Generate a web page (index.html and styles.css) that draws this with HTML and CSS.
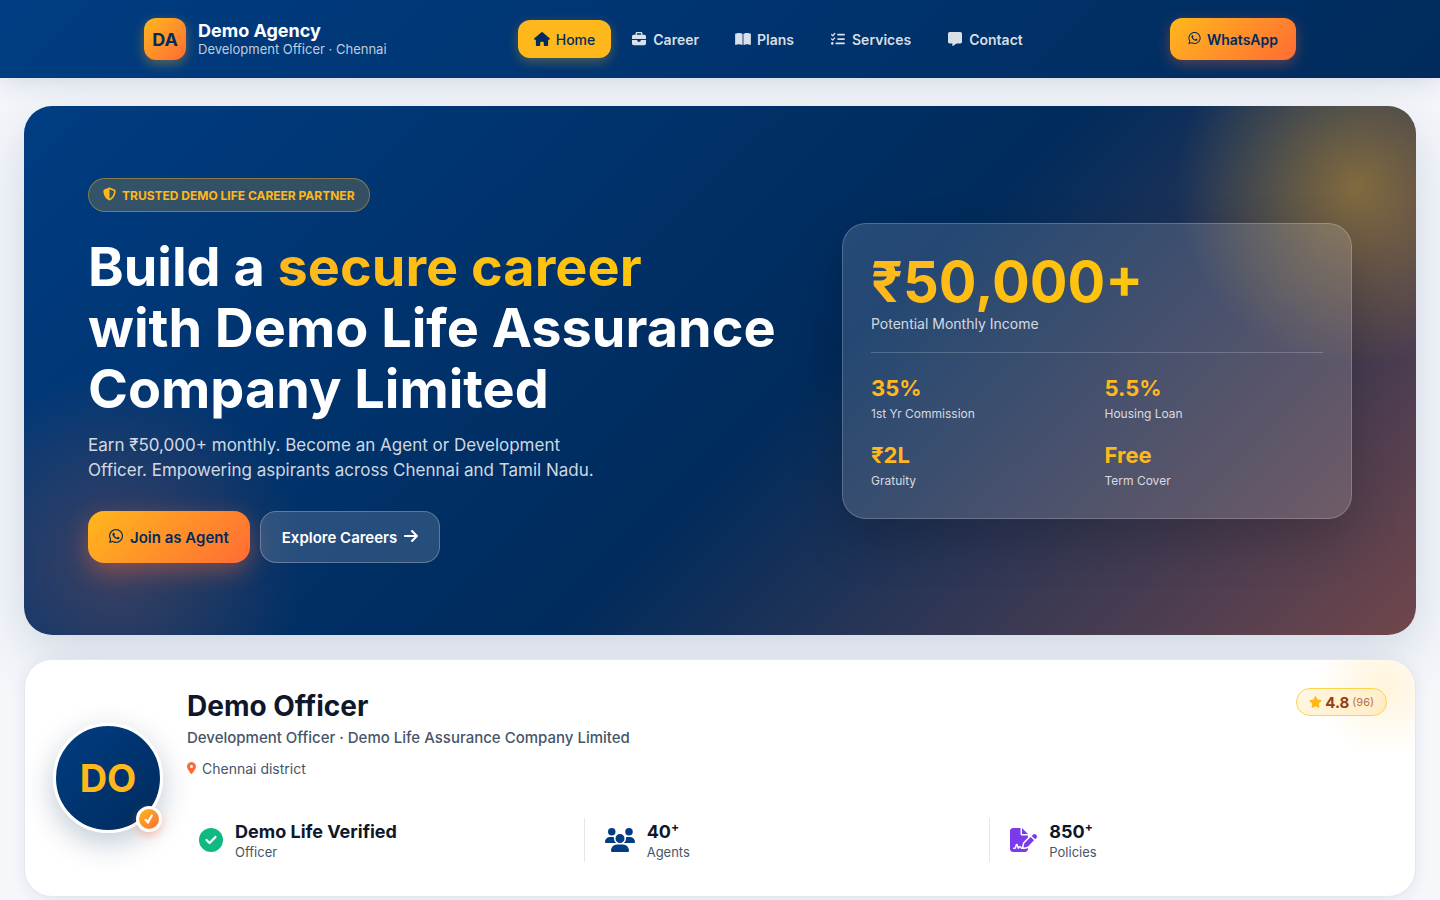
FILE: index.html
```html
<!DOCTYPE html>
<html lang="en">
<head>
<meta charset="utf-8">
<meta name="viewport" content="width=device-width, initial-scale=1">
<title>Demo Agency</title>
<link rel="stylesheet" href="styles.css">
</head>
<body>
<svg class="sprite" aria-hidden="true">
  <symbol id="whatsapp" viewBox="0 0 448 512"><path d="M380.9 97.1C339 55.1 283.2 32 223.9 32c-122.4 0-222 99.6-222 222 0 39.1 10.2 77.3 29.6 111L0 480l117.7-30.9c32.4 17.7 68.9 27 106.1 27h.1c122.3 0 224.1-99.6 224.1-222 0-59.3-25.2-115-67.1-157zm-157 341.6c-33.2 0-65.7-8.9-94-25.7l-6.7-4-69.8 18.3L72 359.2l-4.4-7c-18.5-29.4-28.2-63.3-28.2-98.2 0-101.7 82.8-184.5 184.6-184.5 49.3 0 95.6 19.2 130.4 54.1 34.8 34.9 56.2 81.2 56.1 130.5 0 101.8-84.9 184.6-186.6 184.6zm101.2-138.2c-5.5-2.8-32.8-16.2-37.9-18-5.1-1.9-8.8-2.8-12.5 2.8-3.7 5.6-14.3 18-17.6 21.8-3.2 3.7-6.5 4.2-12 1.4-32.6-16.3-54-29.1-75.5-66-5.7-9.8 5.7-9.1 16.3-30.3 1.8-3.7.9-6.9-.5-9.7-1.4-2.8-12.5-30.1-17.1-41.2-4.5-10.8-9.1-9.3-12.5-9.5-3.2-.2-6.9-.2-10.6-.2-3.7 0-9.7 1.4-14.8 6.9-5.1 5.6-19.4 19-19.4 46.3 0 27.3 19.9 53.7 22.6 57.4 2.8 3.7 39.1 59.7 94.8 83.8 35.2 15.2 49 16.5 66.6 13.9 10.7-1.6 32.8-13.4 37.4-26.4 4.6-13 4.6-24.1 3.2-26.4-1.3-2.5-5-3.9-10.5-6.6z"/></symbol>
</svg>

<header class="header">
  <div class="header-inner">
    <a class="brand" href="#">
      <span class="brand-mark">DA</span>
      <span class="brand-text">
        <span class="brand-name">Demo Agency</span>
        <span class="brand-sub">Development Officer · Chennai</span>
      </span>
    </a>
    <nav class="nav" aria-label="Main">
      <a class="nav-link nav-link-active" href="#"><svg class="nav-icon" viewBox="0 0 576 512"><path d="M575.8 255.5c0 18-15 32.1-32 32.1h-32l.7 160.2c0 2.7-.2 5.4-.5 8.1V472c0 22.1-17.9 40-40 40H392c-22.1 0-40-17.9-40-40V384c0-17.7-14.3-32-32-32H256c-17.7 0-32 14.3-32 32v88c0 22.1-17.9 40-40 40H104c-22.1 0-40-17.9-40-40V287.6H32c-18 0-32-14-32-32.1c0-9 3-17 10-24L266.4 8c7-7 15-8 22-8s15 2 21 7L564.8 231.5c8 7 12 15 11 24z"/></svg>Home</a>
      <a class="nav-link" href="#"><svg class="nav-icon" viewBox="0 0 512 512"><path d="M184 48H328c4.4 0 8 3.6 8 8V96H176V56c0-4.4 3.6-8 8-8zm-56 8V96H64C28.7 96 0 124.7 0 160v96H192 320 512V160c0-35.3-28.7-64-64-64H384V56c0-30.9-25.1-56-56-56H184c-30.9 0-56 25.1-56 56zM512 288H320v32c0 17.7-14.3 32-32 32H224c-17.7 0-32-14.3-32-32V288H0V416c0 35.3 28.7 64 64 64H448c35.3 0 64-28.7 64-64V288z"/></svg>Career</a>
      <a class="nav-link" href="#"><svg class="nav-icon" viewBox="0 0 576 512"><path d="M249.6 471.5c10.8 3.8 22.4-4.1 22.4-15.5V78.6c0-4.2-1.6-8.4-5-11C247.4 52 202.4 32 144 32C93.5 32 46.3 45.3 18.1 56.1C6.8 60.5 0 71.7 0 83.8V454.1c0 11.9 12.8 20.2 24.1 16.5C55.6 460.1 105.5 448 144 448c33.9 0 79 14 105.6 23.5zm76.8 0C353 462 398.1 448 432 448c38.5 0 88.4 12.1 119.9 22.6c11.3 3.8 24.1-4.6 24.1-16.5V83.8c0-12.1-6.8-23.3-18.1-27.6C529.7 45.3 482.5 32 432 32c-58.4 0-103.4 20-123 35.6c-3.3 2.6-5 6.8-5 11V456c0 11.4 11.7 19.3 22.4 15.5z"/></svg>Plans</a>
      <a class="nav-link" href="#"><svg class="nav-icon" viewBox="0 0 512 512"><path d="M152.1 38.2c9.9 8.9 10.7 24 1.8 33.9l-72 80c-4.4 4.9-10.6 7.8-17.2 7.9s-12.9-2.4-17.6-7L7 113C-2.3 103.6-2.3 88.4 7 79s24.6-9.4 33.9 0l22.1 22.1 55.1-61.2c8.9-9.9 24-10.7 33.9-1.8zm0 160c9.9 8.9 10.7 24 1.8 33.9l-72 80c-4.4 4.9-10.6 7.8-17.2 7.9s-12.9-2.4-17.6-7L7 273c-9.4-9.4-9.4-24.6 0-33.9s24.6-9.4 33.9 0l22.1 22.1 55.1-61.2c8.9-9.9 24-10.7 33.9-1.8zM224 96c0-17.7 14.3-32 32-32H480c17.7 0 32 14.3 32 32s-14.3 32-32 32H256c-17.7 0-32-14.3-32-32zm0 160c0-17.7 14.3-32 32-32H480c17.7 0 32 14.3 32 32s-14.3 32-32 32H256c-17.7 0-32-14.3-32-32zM160 416c0-17.7 14.3-32 32-32H480c17.7 0 32 14.3 32 32s-14.3 32-32 32H192c-17.7 0-32-14.3-32-32zM48 368a48 48 0 1 1 0 96 48 48 0 1 1 0-96z"/></svg>Services</a>
      <a class="nav-link" href="#"><svg class="nav-icon" viewBox="0 0 512 512"><path d="M64 0C28.7 0 0 28.7 0 64V352c0 35.3 28.7 64 64 64h96v80c0 6.1 3.4 11.6 8.8 14.3s11.9 2.1 16.8-1.5L309.3 416H448c35.3 0 64-28.7 64-64V64c0-35.3-28.7-64-64-64H64z"/></svg>Contact</a>
    </nav>
    <a class="header-cta" href="#"><svg class="icon-sm"><use href="#whatsapp"/></svg>WhatsApp</a>
  </div>
</header>

<main class="main">
  <section class="hero">
    <div class="hero-copy">
      <span class="badge"><svg class="icon-sm" viewBox="0 0 512 512"><path d="M256 0c4.6 0 9.2 1 13.4 2.9L457.7 82.8c22 9.3 38.4 31 38.3 57.2c-.5 99.2-41.3 280.7-213.6 363.2c-16.7 8-36.1 8-52.8 0C57.3 420.7 16.5 239.2 16 140c-.1-26.2 16.3-47.9 38.3-57.2L242.7 2.9C246.8 1 251.4 0 256 0zm0 66.8V444.8C394 378 431.1 230.1 432 141.4L256 66.8z"/></svg>TRUSTED DEMO LIFE CAREER PARTNER</span>
      <h1 class="hero-title">Build a <span class="gold-text">secure career</span><br>with Demo Life Assurance<br>Company Limited</h1>
      <p class="hero-lead">Earn ₹50,000+ monthly. Become an Agent or Development<br>Officer. Empowering aspirants across Chennai and Tamil Nadu.</p>
      <div class="hero-actions">
        <a class="btn btn-primary" href="#"><svg class="icon-md"><use href="#whatsapp"/></svg>Join as Agent</a>
        <a class="btn btn-glass" href="#">Explore Careers<svg class="icon-md" viewBox="0 0 448 512"><path d="M438.6 278.6c12.5-12.5 12.5-32.8 0-45.3l-160-160c-12.5-12.5-32.8-12.5-45.3 0s-12.5 32.8 0 45.3L338.8 224 32 224c-17.7 0-32 14.3-32 32s14.3 32 32 32l306.7 0L233.4 393.4c-12.5 12.5-12.5 32.8 0 45.3s32.8 12.5 45.3 0l160-160z"/></svg></a>
      </div>
    </div>
    <div class="income">
      <div class="income-head">
        <div class="income-value gold-text">₹50,000+</div>
        <div class="income-label">Potential Monthly Income</div>
      </div>
      <dl class="perks">
        <div class="perk"><dt>1st Yr Commission</dt><dd>35%</dd></div>
        <div class="perk"><dt>Housing Loan</dt><dd>5.5%</dd></div>
        <div class="perk"><dt>Gratuity</dt><dd>₹2L</dd></div>
        <div class="perk"><dt>Term Cover</dt><dd>Free</dd></div>
      </dl>
    </div>
  </section>

  <section class="profile">
    <div class="avatar">DO<span class="avatar-tick"><svg viewBox="0 0 12 12"><path d="M2.6 6.8 4.9 9.4 8.8 2.4" fill="none" stroke="#fff" stroke-width="2.2" stroke-linecap="round"/></svg></span></div>
    <div class="profile-body">
      <div class="profile-top">
        <div>
          <h2 class="profile-name">Demo Officer</h2>
          <p class="profile-role">Development Officer · Demo Life Assurance Company Limited</p>
          <p class="profile-place"><svg class="icon-pin" viewBox="0 0 384 512"><path d="M215.7 499.2C267 435 384 279.4 384 192C384 86 298 0 192 0S0 86 0 192c0 87.4 117 243 168.3 307.2c12.3 15.3 35.1 15.3 47.4 0zM192 128a64 64 0 1 1 0 128 64 64 0 1 1 0-128z"/></svg>Chennai district</p>
        </div>
        <div class="rating"><svg class="icon-star" viewBox="0 0 576 512"><path d="M316.9 18C311.6 7 300.4 0 288.1 0s-23.4 7-28.8 18L195 150.3 51.4 171.5c-12 1.8-22 10.2-25.7 21.7s-.7 24.2 7.9 32.7L137.8 329 113.2 474.7c-2 12 3 24.2 12.9 31.3s23 8 33.8 2.3l128.3-68.5 128.3 68.5c10.8 5.7 23.9 4.9 33.8-2.3s14.9-19.3 12.9-31.3L438.5 329 542.7 225.9c8.6-8.5 11.7-21.2 7.9-32.7s-13.7-19.9-25.7-21.7L381.2 150.3 316.9 18z"/></svg><strong>4.8</strong><small>(96)</small></div>
      </div>
      <div class="stats">
        <div class="stat"><svg class="stat-icon green" viewBox="0 0 512 512"><path d="M256 512A256 256 0 1 0 256 0a256 256 0 1 0 0 512zM369 209L241 337c-9.4 9.4-24.6 9.4-33.9 0l-64-64c-9.4-9.4-9.4-24.6 0-33.9s24.6-9.4 33.9 0l47 47L335 175c9.4-9.4 24.6-9.4 33.9 0s9.4 24.6 0 33.9z"/></svg><div><div class="stat-value">Demo Life Verified</div><div class="stat-label">Officer</div></div></div>
        <span class="divider"></span>
        <div class="stat"><svg class="stat-icon stat-icon-wide blue" viewBox="0 0 640 512"><path d="M144 0a80 80 0 1 1 0 160A80 80 0 1 1 144 0zM512 0a80 80 0 1 1 0 160A80 80 0 1 1 512 0zM0 298.7C0 239.8 47.8 192 106.7 192h42.7c15.9 0 31 3.5 44.6 9.7c-1.3 7.2-1.9 14.7-1.9 22.3c0 38.2 16.8 72.5 43.3 96c-.2 0-.4 0-.7 0H21.3C9.6 320 0 310.4 0 298.7zM405.3 320c-.2 0-.4 0-.7 0c26.6-23.5 43.3-57.8 43.3-96c0-7.6-.7-15-1.9-22.3c13.6-6.3 28.7-9.7 44.6-9.7h42.7C592.2 192 640 239.8 640 298.7c0 11.8-9.6 21.3-21.3 21.3H405.3zM224 224a96 96 0 1 1 192 0 96 96 0 1 1 -192 0zM128 485.3C128 411.7 187.7 352 261.3 352H378.7C452.3 352 512 411.7 512 485.3c0 14.7-11.9 26.7-26.7 26.7H154.7c-14.7 0-26.7-11.9-26.7-26.7z"/></svg><div><div class="stat-value">40<sup>+</sup></div><div class="stat-label">Agents</div></div></div>
        <span class="divider"></span>
        <div class="stat"><svg class="stat-icon stat-icon-mid purple" viewBox="0 0 576 512"><path d="M64 0C28.7 0 0 28.7 0 64V448c0 35.3 28.7 64 64 64H320c35.3 0 64-28.7 64-64V428.7c-2.7 1.1-5.4 2-8.2 2.7l-60.1 15c-3 .7-6 1.2-9 1.4c-.9 .1-1.8 .2-2.7 .2H240c-6.1 0-11.6-3.4-14.3-8.8l-8.8-17.7c-1.7-3.4-5.1-5.5-8.8-5.5s-7.2 2.1-8.8 5.5l-8.8 17.7c-2.9 5.9-9.2 9.4-15.7 8.8s-12.1-5.1-13.9-11.3L144 381l-9.8 32.8c-6.1 20.3-24.8 34.2-46 34.2H80c-8.8 0-16-7.2-16-16s7.2-16 16-16h8.2c7.1 0 13.3-4.6 15.3-11.4l14.9-49.5c3.4-11.3 13.8-19.1 25.6-19.1s22.2 7.7 25.6 19.1l11.6 38.6c7.4-6.2 16.8-9.7 26.8-9.7c15.9 0 30.4 9 37.5 23.2l4.4 8.8h8.9c-3.1-8.8-3.7-18.4-1.4-27.8l15-60.1c2.8-11.3 8.6-21.5 16.8-29.7L384 203.6V160H256c-17.7 0-32-14.3-32-32V0H64zM256 0V128H384L256 0zM549.8 139.7c-15.6-15.6-40.9-15.6-56.6 0l-29.4 29.4 71 71 29.4-29.4c15.6-15.6 15.6-40.9 0-56.6l-14.4-14.4zM311.9 321c-4.1 4.1-7 9.2-8.4 14.9l-15 60.1c-1.4 5.5 .2 11.2 4.2 15.2s9.7 5.6 15.2 4.2l60.1-15c5.6-1.4 10.8-4.3 14.9-8.4L512.1 262.7l-71-71L311.9 321z"/></svg><div><div class="stat-value">850<sup>+</sup></div><div class="stat-label">Policies</div></div></div>
      </div>
    </div>
  </section>
</main>
</body>
</html>
```

FILE: styles.css
```css
:root {
  --navy: #002b5c;
  --blue: #003d82;
  --gold: #ffb81c;
  --orange: #ff6b35;
  --ink: #0f172a;
  --slate: #475569;
}

* { box-sizing: border-box; }

body {
  margin: 0;
  background: #f5f7fb;
  color: var(--ink);
  font-family: Inter, "Noto Sans", sans-serif;
}

h1, h2, p, dl, dd { margin: 0; }
a { color: inherit; text-decoration: none; }
svg { display: block; flex: none; fill: currentColor; }
.sprite { display: none; }

.header {
  position: relative;
  z-index: 1;
  background: linear-gradient(135deg, var(--blue), var(--navy));
  box-shadow: 0 4px 24px rgba(0, 43, 92, 0.15);
}
.header-inner {
  display: flex;
  align-items: center;
  justify-content: space-between;
  max-width: 1200px;
  margin: 0 auto;
  padding: 18px 24px;
}
.brand { display: flex; align-items: center; gap: 12px; color: #fff; }
.brand-mark {
  display: grid;
  place-items: center;
  width: 42px;
  height: 42px;
  border-radius: 12px;
  background: linear-gradient(135deg, var(--gold), var(--orange));
  box-shadow: 0 4px 12px rgba(255, 184, 28, 0.35);
  color: var(--navy);
  font-size: 18px;
  font-weight: 700;
}
.brand-text { display: flex; flex-direction: column; }
.brand-name { font-size: 18px; line-height: 20px; font-weight: 700; }
.brand-sub { font-size: 13px; line-height: 16px; color: rgba(255, 255, 255, 0.75); }

.nav { display: flex; gap: 4px; }
.nav-link {
  display: flex;
  align-items: center;
  gap: 6px;
  height: 38px;
  padding: 0 16px;
  border-radius: 12px;
  color: rgba(255, 255, 255, 0.85);
  font-size: 14px;
  font-weight: 600;
}
.nav-link-active {
  background: var(--gold);
  box-shadow: 0 4px 12px rgba(255, 184, 28, 0.3);
  color: var(--navy);
  font-weight: 500;
}
.nav-icon { width: 16px; height: 14px; }

.header-cta {
  display: flex;
  align-items: center;
  gap: 6px;
  height: 42px;
  padding: 0 18px;
  border-radius: 12px;
  background: linear-gradient(135deg, var(--gold), var(--orange));
  box-shadow: 0 4px 14px rgba(255, 107, 53, 0.35);
  color: var(--navy);
  font-size: 14px;
  font-weight: 600;
}
.icon-sm { width: 13px; height: 14px; margin-bottom: 2px; }
.icon-md { width: 14px; height: 16px; margin-bottom: 2px; }

.main { display: grid; gap: 24px; padding: 28px 24px 32px; }

.hero {
  display: grid;
  grid-template-columns: 7fr 5fr;
  align-items: center;
  gap: 40px;
  padding: 72px 64px;
  border-radius: 28px;
  background:
    radial-gradient(circle 180px at calc(100% - 60px) 80px, rgba(255, 184, 28, 0.4), rgba(255, 184, 28, 0)),
    radial-gradient(circle 190px at 92px calc(100% - 72px), rgba(255, 107, 53, 0.24), rgba(255, 107, 53, 0)),
    linear-gradient(135deg, var(--blue), var(--navy) 55%, #70464b);
  box-shadow: 0 20px 60px rgba(0, 43, 92, 0.16);
}
.badge {
  display: inline-flex;
  align-items: center;
  gap: 6px;
  height: 34px;
  padding: 0 14px;
  border: 1px solid rgba(255, 184, 28, 0.4);
  border-radius: 17px;
  background: rgba(255, 184, 28, 0.2);
  color: var(--gold);
  font-size: 12px;
  font-weight: 700;
}
.hero-title {
  margin-top: 24px;
  color: #fff;
  font-size: 54px;
  line-height: 61px;
  font-weight: 700;
  white-space: nowrap;
}
.gold-text {
  background: linear-gradient(90deg, var(--gold), #ffc60b);
  -webkit-background-clip: text;
  background-clip: text;
  color: transparent;
}
.hero-lead {
  margin-top: 14px;
  color: rgba(255, 255, 255, 0.82);
  font-size: 17px;
  line-height: 25px;
}
.hero-actions { display: flex; gap: 10px; margin-top: 28px; }
.btn {
  display: flex;
  align-items: center;
  gap: 7px;
  height: 52px;
  padding: 0 21px;
  border-radius: 16px;
  font-size: 15px;
  font-weight: 600;
}
.btn-primary {
  background: linear-gradient(135deg, var(--gold), var(--orange));
  box-shadow: 0 8px 24px rgba(255, 107, 53, 0.4);
  color: var(--navy);
}
.btn-glass {
  border: 1px solid rgba(255, 255, 255, 0.25);
  background: rgba(255, 255, 255, 0.15);
  color: #fff;
}

.income {
  padding: 28px 28px 26px;
  border: 1px solid rgba(255, 255, 255, 0.2);
  border-radius: 24px;
  background: rgba(255, 255, 255, 0.14);
  box-shadow: 0 20px 50px rgba(0, 0, 0, 0.2);
}
.income-head { padding-bottom: 18px; border-bottom: 1px solid rgba(255, 255, 255, 0.2); }
.income-value {
  width: fit-content;
  font-size: 56px;
  line-height: 60px;
  font-weight: 700;
}
.income-label { margin-top: 2px; color: rgba(255, 255, 255, 0.8); font-size: 14px; line-height: 20px; }
.perks { display: grid; grid-template-columns: 1fr 1fr; gap: 15px; padding-top: 20px; }
.perk { display: flex; flex-direction: column-reverse; }
.perk dt { color: rgba(255, 255, 255, 0.8); font-size: 12px; line-height: 22px; }
.perk dd { color: var(--gold); font-size: 22px; line-height: 30px; font-weight: 700; }

.profile {
  display: flex;
  align-items: center;
  gap: 24px;
  padding: 28px;
  border: 1px solid #e2e8f0;
  border-radius: 28px;
  background:
    radial-gradient(circle 70px at calc(100% - 30px) 26px, rgba(255, 184, 28, 0.16), rgba(255, 184, 28, 0)),
    #fff;
  box-shadow: 0 4px 16px rgba(0, 43, 92, 0.08);
}
.avatar {
  position: relative;
  display: grid;
  place-items: center;
  flex: none;
  width: 110px;
  height: 110px;
  border: 3px solid #fff;
  border-radius: 50%;
  background: linear-gradient(135deg, var(--blue), var(--navy));
  box-shadow: 0 10px 30px rgba(0, 43, 92, 0.25);
  color: var(--gold);
  font-size: 38px;
  font-weight: 700;
}
.avatar-tick {
  position: absolute;
  right: -2px;
  bottom: -2px;
  display: grid;
  place-items: center;
  width: 26px;
  height: 26px;
  border: 3px solid #fff;
  border-radius: 50%;
  background: linear-gradient(135deg, var(--gold), var(--orange));
  box-shadow: 0 4px 10px rgba(255, 107, 53, 0.35);
}
.avatar-tick svg { width: 12px; height: 12px; }
.profile-body { flex: 1; }
.profile-top { display: flex; justify-content: space-between; align-items: flex-start; }
.profile-name { font-size: 28px; line-height: 36px; font-weight: 700; }
.profile-role { margin-top: 4px; color: var(--slate); font-size: 15px; line-height: 20px; font-weight: 500; }
.profile-place {
  display: flex;
  align-items: center;
  gap: 6px;
  margin-top: 12px;
  color: var(--slate);
  font-size: 14px;
  line-height: 18px;
}
.icon-pin { width: 9px; height: 12px; margin-bottom: 2px; color: var(--orange); }
.rating {
  display: flex;
  align-items: center;
  gap: 3px;
  height: 28px;
  padding: 0 12px;
  border: 1px solid #fcd34d;
  border-radius: 14px;
  background: linear-gradient(135deg, #fff7e3, #ffecc4);
  color: #92400e;
}
.rating strong { font-size: 15px; }
.rating small { color: #b5714a; font-size: 11px; }
.icon-star { width: 13px; height: 12px; color: var(--gold); }

.stats {
  display: grid;
  grid-template-columns: 1fr 1px 1fr 1px 1fr;
  gap: 8px;
  margin-top: 40px;
  padding-bottom: 6px;
}
.divider { background: #e2e8f0; }
.stat { display: flex; align-items: center; gap: 12px; height: 44px; padding: 0 12px; }
.stat-icon { width: 24px; height: 24px; }
.stat-icon-mid { width: 27px; }
.stat-icon-wide { width: 30px; }
.stat-value { padding-top: 2px; font-size: 18px; line-height: 22px; font-weight: 700; }
.stat-value sup { font-size: 12px; line-height: 0; }
.stat-label { color: var(--slate); font-size: 13px; line-height: 18px; }
.green { color: #10b981; }
.blue { color: var(--blue); }
.purple { color: #7c3aed; }
```
